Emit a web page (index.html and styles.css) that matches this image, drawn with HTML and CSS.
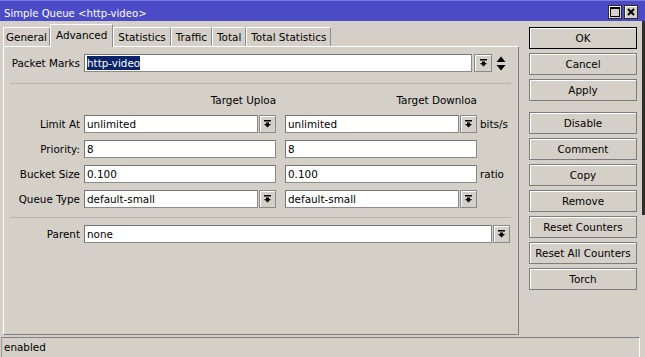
FILE: index.html
```html
<!DOCTYPE html>
<html lang="en">
<head>
  <meta charset="UTF-8" />
  <title>Simple Queue &lt;http-video&gt;</title>
  <link rel="stylesheet" href="styles.css">
</head>
<body>
  <div class="titlebar">
    <span class="title">Simple Queue &lt;http-video&gt;</span>
    <div class="title-btns">
      <span class="tbtn">
        <svg width="10" height="10" viewBox="0 0 10 10"><rect x="0.5" y="0.5" width="9" height="9" fill="none" stroke="#000"/><rect width="10" height="2"/></svg>
      </span>
      <span class="tbtn">
        <svg width="8" height="8" viewBox="0 0 8 8"><path d="M1 1L7 7M7 1L1 7" stroke="#000" stroke-width="2"/></svg>
      </span>
    </div>
  </div>

  <div class="content">
    <div class="main">
      <div class="tabs">
        <div class="tab">General</div>
        <div class="tab active">Advanced</div>
        <div class="tab">Statistics</div>
        <div class="tab">Traffic</div>
        <div class="tab">Total</div>
        <div class="tab">Total Statistics</div>
      </div>

      <div class="panel">
        <div class="row row-marks">
          <span class="lbl">Packet Marks</span>
          <div class="combo combo-marks">
            <div class="field"><span class="sel">http-video</span></div>
            <span class="drop"><svg width="7" height="8" viewBox="0 0 7 8"><rect width="7" height="1.5"/><rect x="2" y="2.5" width="3" height="2"/><path d="M0 4h7L3.5 7.5z"/></svg></span>
          </div>
          <span class="updown"><svg width="10" height="15" viewBox="0 0 10 15"><path d="M5 0.5L9.5 6H0.5z M0.5 9h9L5 14.5z"/></svg></span>
        </div>

        <div class="sep sep-top"></div>

        <div class="row heads">
          <span class="lbl"></span>
          <div class="col head">Target Uploa</div>
          <div class="col head">Target Downloa</div>
        </div>

        <div class="row row-first">
          <span class="lbl">Limit At</span>
          <div class="col combo">
            <div class="field">unlimited</div>
            <span class="drop"><svg width="7" height="8" viewBox="0 0 7 8"><rect width="7" height="1.5"/><rect x="2" y="2.5" width="3" height="2"/><path d="M0 4h7L3.5 7.5z"/></svg></span>
          </div>
          <div class="col combo">
            <div class="field">unlimited</div>
            <span class="drop"><svg width="7" height="8" viewBox="0 0 7 8"><rect width="7" height="1.5"/><rect x="2" y="2.5" width="3" height="2"/><path d="M0 4h7L3.5 7.5z"/></svg></span>
          </div>
          <span class="unit">bits/s</span>
        </div>

        <div class="row">
          <span class="lbl">Priority:</span>
          <div class="col field">8</div>
          <div class="col field">8</div>
        </div>

        <div class="row">
          <span class="lbl">Bucket Size</span>
          <div class="col field">0.100</div>
          <div class="col field">0.100</div>
          <span class="unit">ratio</span>
        </div>

        <div class="row">
          <span class="lbl">Queue Type</span>
          <div class="col combo">
            <div class="field">default-small</div>
            <span class="drop"><svg width="7" height="8" viewBox="0 0 7 8"><rect width="7" height="1.5"/><rect x="2" y="2.5" width="3" height="2"/><path d="M0 4h7L3.5 7.5z"/></svg></span>
          </div>
          <div class="col combo">
            <div class="field">default-small</div>
            <span class="drop"><svg width="7" height="8" viewBox="0 0 7 8"><rect width="7" height="1.5"/><rect x="2" y="2.5" width="3" height="2"/><path d="M0 4h7L3.5 7.5z"/></svg></span>
          </div>
        </div>

        <div class="sep sep-bottom"></div>

        <div class="row">
          <span class="lbl">Parent</span>
          <div class="combo combo-parent">
            <div class="field">none</div>
            <span class="drop"><svg width="7" height="8" viewBox="0 0 7 8"><rect width="7" height="1.5"/><rect x="2" y="2.5" width="3" height="2"/><path d="M0 4h7L3.5 7.5z"/></svg></span>
          </div>
        </div>
      </div>
    </div>

    <div class="side">
      <button class="btn default">OK</button>
      <button class="btn">Cancel</button>
      <button class="btn">Apply</button>
      <button class="btn group">Disable</button>
      <button class="btn">Comment</button>
      <button class="btn">Copy</button>
      <button class="btn">Remove</button>
      <button class="btn">Reset Counters</button>
      <button class="btn">Reset All Counters</button>
      <button class="btn">Torch</button>
    </div>

    <div class="edge"></div>
  </div>

  <div class="status">enabled</div>
</body>
</html>
```

FILE: styles.css
```css
* {
  margin: 0;
  padding: 0;
  box-sizing: border-box;
}

body {
  width: 645px;
  height: 357px;
  overflow: hidden;
  background-color: #d4d0c8;
  font-family: "DejaVu Sans", sans-serif;
  font-size: 10.4px;
  color: #000;
}

/* title bar */
.titlebar {
  height: 21px;
  display: flex;
  justify-content: space-between;
  align-items: flex-start;
  padding: 0 7px 0 4px;
  background-color: #4b4bc8;
  box-shadow: inset 0 1px 0 #7a7ae0;
  color: #fff;
}

.title {
  font-size: 10.1px;
  line-height: 13px;
  padding-top: 7px;
}

.title-btns {
  display: flex;
  gap: 2px;
  margin-top: 5px;
}

.tbtn {
  width: 14px;
  height: 14px;
  display: flex;
  justify-content: center;
  align-items: center;
  background-color: #d4d0c8;
  border: 1px solid #2a2a2a;
  box-shadow: inset 1px 1px 0 #fff;
}

/* body */
.content {
  height: 316px;
  display: flex;
  padding-left: 3px;
}

.main {
  width: 516px;
}

.tabs {
  height: 25px;
  display: flex;
  align-items: flex-end;
}

.tab {
  height: 19px;
  line-height: 18px;
  padding: 0 4px;
  white-space: nowrap;
  border-top: 1px solid #fff;
  border-left: 1px solid #fff;
  border-right: 1px solid #8c8c8c;
}

.tab:first-child {
  padding: 0 2px;
}

.tab.active {
  height: 23px;
  line-height: 21px;
  padding: 0 5px;
  margin-bottom: -1px;
  position: relative;
  z-index: 1;
  background-color: #d4d0c8;
}

.panel {
  height: 289px;
  padding: 7px 7px 0 6px;
  border-top: 1px solid #fff;
  border-left: 1px solid #fff;
  border-right: 1px solid #808080;
  border-bottom: 1px solid #808080;
  display: flex;
  flex-direction: column;
}

.row {
  height: 18px;
  display: flex;
  align-items: center;
  margin-top: 7px;
  flex-shrink: 0;
}

.row-marks {
  margin-top: 0;
}

.row-first {
  margin-top: 8px;
}

.lbl {
  width: 70px;
  margin-right: 4px;
  text-align: right;
  white-space: nowrap;
  overflow: hidden;
  flex-shrink: 0;
}

.col {
  width: 192px;
  flex-shrink: 0;
}

.col + .col {
  margin-left: 9px;
}

.heads {
  height: 13px;
  margin-top: 10px;
}

.head {
  white-space: nowrap;
  text-align: right;
  line-height: 13px;
}

.field {
  height: 18px;
  line-height: 16px;
  padding-left: 2px;
  background-color: #fff;
  border: 1px solid #8a8a8a;
  border-top-color: #767676;
  border-left-color: #767676;
  white-space: nowrap;
  overflow: hidden;
}

.combo {
  display: flex;
}

.combo .field {
  flex: 1;
}

.combo-marks {
  width: 408px;
}

.combo-parent {
  width: 426px;
}

.drop {
  width: 17px;
  height: 18px;
  margin-left: 1px;
  display: flex;
  justify-content: center;
  align-items: center;
  border: 1px solid #8a8a8a;
  box-shadow: inset 1px 1px 0 #fff;
}

.combo-marks .drop {
  width: 18px;
  margin-left: 2px;
}

.sel {
  background-color: #0a246a;
  color: #fff;
  padding: 1px 0;
}

.updown {
  margin-left: 4px;
  display: flex;
}

.unit {
  width: 29px;
  margin-left: 3px;
  white-space: nowrap;
}

.sep {
  height: 1px;
  background-color: #b9b5ad;
  flex-shrink: 0;
}

.sep-top {
  margin-top: 11px;
}

.sep-bottom {
  margin-top: 9px;
}

/* side buttons */
.side {
  width: 108px;
  margin-left: 10px;
  padding-top: 6px;
  display: flex;
  flex-direction: column;
  gap: 4px;
}

.btn {
  height: 22px;
  font-family: inherit;
  font-size: 10.4px;
  color: #000;
  background-color: #d4d0c8;
  border: 1px solid #7c7c7c;
  box-shadow: inset 1px 1px 0 #fff;
  white-space: nowrap;
}

.btn.default {
  border-color: #000;
}

.btn.group {
  margin-top: 7px;
}

/* window frame on the right */
.edge {
  width: 3px;
  height: 194px;
  margin-left: auto;
  background-color: #2e2e2e;
}

/* status bar */
.status {
  width: 639px;
  height: 20px;
  margin-left: 1px;
  padding-left: 2px;
  line-height: 19px;
  border-top: 1px solid #808080;
  border-left: 1px solid #9a9a9a;
  border-right: 1px solid #fff;
}
```
